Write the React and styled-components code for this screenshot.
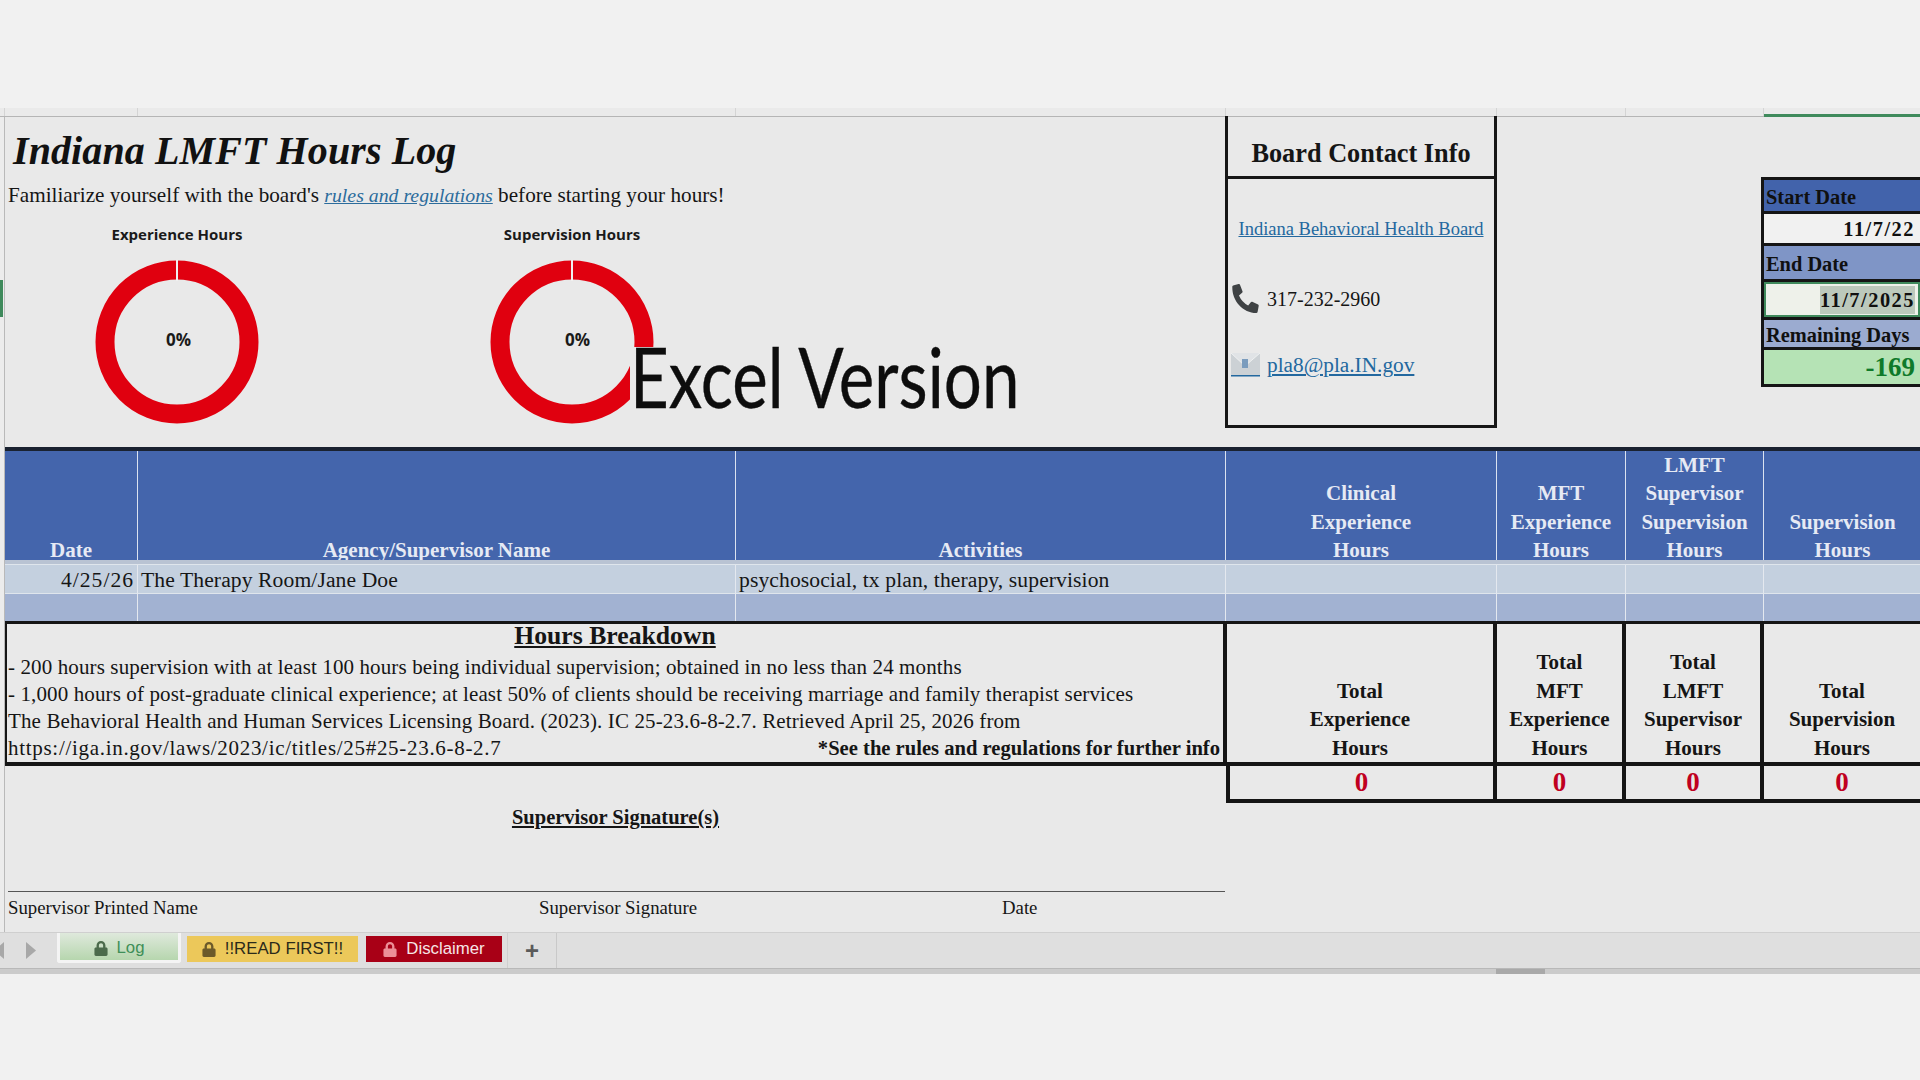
import React from 'react';
import styled, { createGlobalStyle } from 'styled-components';
import { FaLock, FaPhoneAlt } from 'react-icons/fa';

const COLUMNS = '133px 598px 490px 271px 129px 138px 157px';
const SERIF = '"Liberation Serif", "Times New Roman", serif';

const GlobalStyle = createGlobalStyle`
  html, body {
    margin: 0;
    padding: 0;
    background: #f1f1f1;
    font-family: ${SERIF};
    overflow: hidden;
  }
`;

const Page = styled.div`
  width: 1920px;
  height: 1080px;
  display: flex;
  flex-direction: column;
  background: #f1f1f1;
  color: #151515;
`;

const TopMargin = styled.div`
  height: 108px;
  flex: none;
`;

const ColumnStrip = styled.div`
  height: 8px;
  flex: none;
  display: grid;
  grid-template-columns: 5px ${COLUMNS};
  background: #eaeaea;
  border-bottom: 1px solid #b5b5b5;
  margin-bottom: -1px;
  position: relative;
`;

const StripCell = styled.div`
  border-right: 1px solid #d4d4d4;
  ${p => p.$active && 'border-bottom: 3px solid #3f8a5c; border-right: 0; margin-bottom: -1px;'}
`;

const SheetRow = styled.div`
  height: 816px;
  flex: none;
  display: flex;
  background: #e9e9e9;
`;

const Gutter = styled.div`
  width: 4px;
  flex: none;
  background: #ececec;
  border-right: 1px solid #b9b9b9;
  display: flex;
  flex-direction: column;
`;

const GutterMark = styled.div`
  margin-top: 164px;
  height: 37px;
  width: 3px;
  background: #3f8a5c;
`;

const Sheet = styled.div`
  width: 1915px;
  display: flex;
  flex-direction: column;
`;

const TopSection = styled.section`
  height: 331px;
  flex: none;
  display: flex;
  position: relative;
`;

const Intro = styled.div`
  width: 1220px;
  flex: none;
  padding: 13px 0 0 3px;
  box-sizing: border-box;
`;

const Title = styled.h1`
  margin: 0 0 0 5px;
  font: italic bold 40px/44px ${SERIF};
  letter-spacing: 0.1px;
  color: #111;
`;

const Subtitle = styled.p`
  margin: 10px 0 0;
  font-size: 21.2px;
  line-height: 24px;
`;

const RulesLink = styled.a`
  font-style: italic;
  font-size: 19.8px;
  color: #2c6c9c;
  text-decoration: underline;
`;

const DonutRow = styled.div`
  display: flex;
  margin-top: 18px;
`;

const DonutBlock = styled.figure`
  margin: 0 0 0 ${p => p.$left}px;
  width: 170px;
  display: flex;
  flex-direction: column;
  align-items: center;
`;

const DonutLabel = styled.figcaption`
  font: 700 15px/18px "Open Sans", sans-serif;
  color: #1a1a1a;
  white-space: nowrap;
`;

const DonutWrap = styled.div`
  margin-top: 17px;
  width: 164px;
  height: 164px;
  position: relative;
`;

const DonutValue = styled.span`
  position: absolute;
  left: ${p => p.$left}px;
  top: 70px;
  font: 700 17px/20px "Open Sans", sans-serif;
  color: #1a1a1a;
`;

const Watermark = styled.div`
  position: absolute;
  left: 625px;
  top: 231px;
  width: 392px;
  height: 64px;
  background: #e9e9e9;
  font: 400 84px/58px "Lato", "Noto Sans", sans-serif;
  color: #0d0d0d;
  -webkit-text-stroke: 0.4px #0d0d0d;
  white-space: nowrap;
  overflow: visible;
`;

const WatermarkText = styled.span`
  display: inline-block;
  transform: scaleX(0.8);
  transform-origin: left center;
`;

const ContactBox = styled.aside`
  width: 272px;
  height: 312px;
  flex: none;
  box-sizing: border-box;
  border: 3px solid #161616;
  border-top: 0;
  display: flex;
  flex-direction: column;
`;

const ContactTitle = styled.h2`
  height: 63px;
  flex: none;
  margin: 0;
  box-sizing: border-box;
  border-bottom: 3px solid #161616;
  display: flex;
  align-items: center;
  justify-content: center;
  font: bold 26.3px/30px ${SERIF};
  padding-top: 15px;
`;

const ContactLink = styled.a`
  font-size: 18.5px;
  line-height: 22px;
  color: #23689f;
  text-decoration: underline;
  text-align: center;
  display: block;
  margin-top: 39px;
`;

const ContactLine = styled.div`
  display: flex;
  align-items: center;
  gap: 7px;
  margin: ${p => p.$top}px 0 0 3px;
  font-size: 20px;
  line-height: 28px;
  ${p => p.$link && `
    font-size: 21.3px;
    color: #23689f;
    text-decoration: underline;
  `}
`;

const PhoneIcon = styled(FaPhoneAlt)`
  width: 29px;
  height: 29px;
  color: #3f4244;
  flex: none;
  transform: scaleX(0.92);
`;

const DatePanel = styled.aside`
  margin: 61px 0 0 264px;
  width: 159px;
  height: 210px;
  flex: none;
  box-sizing: border-box;
  background: #151515;
  padding: 3px 0 3px 3px;
  display: flex;
  flex-direction: column;
  gap: 3px;
`;

const DateCell = styled.div`
  height: ${p => p.$h}px;
  flex: none;
  box-sizing: border-box;
  display: flex;
  align-items: center;
  justify-content: ${p => (p.$value ? 'flex-end' : 'flex-start')};
  padding: ${p => (p.$value ? '0 5px 0 2px' : '2px 0 0 2px')};
  background: ${p => p.$bg};
  color: ${p => p.$color || '#101010'};
  font-weight: bold;
  font-size: ${p => p.$size || 20.4}px;
  letter-spacing: ${p => (p.$spaced ? 1.5 : 0)}px;
  line-height: 24px;
  white-space: nowrap;
  ${p => p.$selected && 'border: 2px solid #3f8a5c; padding-right: 3px;'}
`;

const Selected = styled.span`
  background: #bcc9bc;
  padding: 2px 0;
`;

const DarkRule = styled.div`
  height: 4px;
  flex: none;
  background: #1a2230;
`;

const GridRow = styled.div`
  display: grid;
  grid-template-columns: ${COLUMNS};
  height: ${p => p.$h}px;
  flex: none;
  background: ${p => p.$bg || 'transparent'};
`;

const HeadCell = styled.div`
  display: flex;
  align-items: flex-end;
  justify-content: center;
  text-align: center;
  font-weight: bold;
  font-size: 21px;
  line-height: 28.4px;
  color: #e6eaf4;
  border-right: 1px solid #dbe2f0;
  padding-bottom: 0;
  &:last-child { border-right: 0; }
`;

const RowGap = styled.div`
  height: 5px;
  flex: none;
  background: #b9c3d3;
  border-bottom: 1px solid #dfe5ec;
  box-sizing: border-box;
`;

const BodyCell = styled.div`
  display: flex;
  align-items: center;
  justify-content: ${p => (p.$right ? 'flex-end' : 'flex-start')};
  padding: 3px 3px 0;
  font-size: 21.6px;
  letter-spacing: ${p => (p.$right ? 1 : 0.1)}px;
  white-space: nowrap;
  border-right: 1px solid #e4e8ef;
  border-bottom: ${p => (p.$line ? '2px solid #dfe5ec' : '0')};
  &:last-child { border-right: 0; }
`;

const Breakdown = styled.div`
  display: grid;
  grid-template-columns: 1222px 270px 129px 138px 156px;
  height: 145px;
  flex: none;
  border-top: 3px solid #151515;
  border-bottom: 4px solid #151515;
  box-sizing: border-box;
`;

const NoteBox = styled.div`
  border-left: 2px solid #151515;
  border-right: 4px solid #151515;
  padding: 0 1px;
  position: relative;
`;

const NoteTitle = styled.h3`
  margin: 0;
  height: 30px;
  text-align: center;
  font: bold 25.7px/24px ${SERIF};
  text-decoration: underline;
`;

const NoteLine = styled.div`
  display: flex;
  justify-content: space-between;
  font-size: 21px;
  letter-spacing: 0.12px;
  line-height: 27px;
  white-space: nowrap;
`;

const NoteUrl = styled.span`
  letter-spacing: 0.7px;
`;

const NoteBold = styled.b`
  margin-right: 2px;
  font-size: 20.6px;
  letter-spacing: 0;
`;

const TotalCell = styled.div`
  display: flex;
  align-items: flex-end;
  justify-content: center;
  text-align: center;
  font-weight: bold;
  font-size: 21px;
  line-height: 28.4px;
  color: #151515;
  border-right: 4px solid #151515;
  &:last-child { border-right: 0; }
`;

const Values = styled.div`
  display: grid;
  grid-template-columns: 1222px 270px 129px 138px 156px;
  height: 37px;
  flex: none;
`;

const ValueCell = styled.div`
  display: flex;
  align-items: center;
  justify-content: center;
  color: #c0001f;
  font-weight: bold;
  font-size: 27px;
  border-bottom: 4px solid #151515;
  border-right: 4px solid #151515;
  ${p => p.$first && 'border-left: 4px solid #151515; margin-left: -1px;'}
  &:last-child { border-right: 0; }
`;

const Signatures = styled.div`
  flex: 1;
  padding-left: 3px;
  display: flex;
  flex-direction: column;
`;

const SignatureTitle = styled.div`
  width: 1215px;
  margin-top: 2px;
  text-align: center;
  font-weight: bold;
  font-size: 20.5px;
  line-height: 24px;
  text-decoration: underline;
`;

const SignatureLine = styled.div`
  width: 1217px;
  margin-top: 62px;
  height: 1px;
  background: #555;
`;

const SignatureLabels = styled.div`
  display: grid;
  grid-template-columns: 531px 463px auto;
  margin-top: 5px;
  font-size: 18.8px;
  line-height: 22px;
`;

const TabBar = styled.nav`
  height: 36px;
  flex: none;
  display: flex;
  align-items: flex-start;
  background: #dfdfdf;
  border-top: 1px solid #cfcfcf;
  box-sizing: border-box;
`;

const ArrowSlot = styled.div`
  width: 57px;
  height: 100%;
  flex: none;
  display: flex;
  align-items: center;
  gap: 22px;
  box-sizing: border-box;
`;

const Tab = styled.div`
  height: ${p => (p.$active ? 30 : 26)}px;
  margin: ${p => (p.$active ? '0 6px 0 0' : '3px 8px 0 0')};
  width: ${p => p.$w}px;
  flex: none;
  box-sizing: border-box;
  display: flex;
  align-items: center;
  justify-content: center;
  gap: 9px;
  font: 16.8px/20px "Liberation Sans", Arial, sans-serif;
  background: ${p => p.$bg};
  color: ${p => p.$color};
  ${p => p.$active && 'border: 3px solid #f4f4f4; border-top: 0; padding-top: 3px; border-radius: 0 0 3px 3px;'}
`;

const LockIcon = styled(FaLock)`
  width: 14px;
  height: 15px;
  color: ${p => p.$color};
`;

const AddTab = styled.div`
  width: 50px;
  height: 100%;
  flex: none;
  margin-left: -3px;
  box-sizing: border-box;
  display: flex;
  align-items: center;
  justify-content: center;
  border-left: 1px solid #cfcfcf;
  border-right: 1px solid #c9c9c9;
  font: 700 24px/24px "Liberation Sans", Arial, sans-serif;
  color: #5a5a5a;
`;

const ScrollTrack = styled.div`
  height: 6px;
  flex: none;
  background: #cbcbcb;
  border-top: 1px solid #b8b8b8;
  box-sizing: border-box;
  padding-left: 1496px;
`;

const ScrollThumb = styled.div`
  width: 49px;
  height: 100%;
  background: #a9a9a9;
`;

function Donut() {
  return (
    <svg width="164" height="164" viewBox="0 0 164 164">
      <circle cx="82" cy="82" r="72" fill="none" stroke="#e0000f" strokeWidth="19" />
      <rect x="81" y="0" width="2" height="21" fill="#f0f0f0" />
    </svg>
  );
}

function EnvelopeIcon() {
  return (
    <svg width="29" height="24" viewBox="0 0 29 24">
      <rect width="29" height="22" fill="#ccd1d5" />
      <path d="M0 0 L14 13 L29 0" fill="#e0e3e6" stroke="#eef0f1" strokeWidth="1" />
      <rect x="11" y="6" width="6" height="9" fill="#7b9cbd" />
      <rect y="22" width="29" height="1.5" fill="#23689f" />
    </svg>
  );
}

function ArrowIcon() {
  return (
    <svg width="10" height="17" viewBox="0 0 10 17">
      <path d="M0 0 L10 8.5 L0 17 Z" fill="#a8a8a8" />
    </svg>
  );
}

function ClippedBackArrow() {
  return (
    <svg width="4" height="17" viewBox="0 0 4 17">
      <path d="M4 0 L4 17 L0 13.6 L0 3.4 Z" fill="#a8a8a8" />
    </svg>
  );
}

const HEADERS = [
  ['Date'],
  ['Agency/Supervisor Name'],
  ['Activities'],
  ['Clinical', 'Experience', 'Hours'],
  ['MFT', 'Experience', 'Hours'],
  ['LMFT', 'Supervisor', 'Supervision', 'Hours'],
  ['Supervision', 'Hours'],
];

const TOTALS = [
  ['Total', 'Experience', 'Hours'],
  ['Total', 'MFT', 'Experience', 'Hours'],
  ['Total', 'LMFT', 'Supervisor', 'Hours'],
  ['Total', 'Supervision', 'Hours'],
];

function Lines({ items }) {
  return (
    <div>
      {items.map(line => (
        <div key={line}>{line}</div>
      ))}
    </div>
  );
}

export default function App() {
  return (
    <Page>
      <GlobalStyle />
      <TopMargin />
      <ColumnStrip>
        <StripCell />
        <StripCell />
        <StripCell />
        <StripCell />
        <StripCell />
        <StripCell />
        <StripCell />
        <StripCell $active />
      </ColumnStrip>
      <SheetRow>
        <Gutter>
          <GutterMark />
        </Gutter>
        <Sheet>
          <TopSection>
            <Intro>
              <Title>Indiana LMFT Hours Log</Title>
              <Subtitle>
                Familiarize yourself with the board's <RulesLink>rules and regulations</RulesLink> before starting your hours!
              </Subtitle>
              <DonutRow>
                <DonutBlock $left={84}>
                  <DonutLabel>Experience Hours</DonutLabel>
                  <DonutWrap>
                    <Donut />
                    <DonutValue $left={71}>0%</DonutValue>
                  </DonutWrap>
                </DonutBlock>
                <DonutBlock $left={225}>
                  <DonutLabel>Supervision Hours</DonutLabel>
                  <DonutWrap>
                    <Donut />
                    <DonutValue $left={75}>0%</DonutValue>
                  </DonutWrap>
                </DonutBlock>
              </DonutRow>
            </Intro>
            <Watermark><WatermarkText>Excel Version</WatermarkText></Watermark>
            <ContactBox>
              <ContactTitle>Board Contact Info</ContactTitle>
              <ContactLink>Indiana Behavioral Health Board</ContactLink>
              <ContactLine $top={44}>
                <PhoneIcon />
                317-232-2960
              </ContactLine>
              <ContactLine $top={38} $link>
                <EnvelopeIcon />
                pla8@pla.IN.gov
              </ContactLine>
            </ContactBox>
            <DatePanel>
              <DateCell $h={31} $bg="#4263ab">Start Date</DateCell>
              <DateCell $h={29} $bg="#f1f1f1" $value $spaced>11/7/22</DateCell>
              <DateCell $h={33} $bg="#7f95c6">End Date</DateCell>
              <DateCell $h={35} $bg="#eef1ea" $value $spaced $selected><Selected>11/7/2025</Selected></DateCell>
              <DateCell $h={27} $bg="#9babd0">Remaining Days</DateCell>
              <DateCell $h={34} $bg="#b5e3b5" $color="#0f7a2a" $size={27} $value>-169</DateCell>
            </DatePanel>
          </TopSection>
          <DarkRule />
          <GridRow $h={109} $bg="#4465ac">
            {HEADERS.map(items => (
              <HeadCell key={items.join(' ')}><Lines items={items} /></HeadCell>
            ))}
          </GridRow>
          <RowGap />
          <GridRow $h={29} $bg="#c4d0df">
            <BodyCell $right $line>4/25/26</BodyCell>
            <BodyCell $line>The Therapy Room/Jane Doe</BodyCell>
            <BodyCell $line>psychosocial, tx plan, therapy, supervision</BodyCell>
            <BodyCell $line />
            <BodyCell $line />
            <BodyCell $line />
            <BodyCell $line />
          </GridRow>
          <GridRow $h={27} $bg="#a2b2d2">
            {HEADERS.map(items => (
              <BodyCell key={items.join(' ')} />
            ))}
          </GridRow>
          <Breakdown>
            <NoteBox>
              <NoteTitle>Hours Breakdown</NoteTitle>
              <NoteLine>- 200 hours supervision with at least 100 hours being individual supervision; obtained in no less than 24 months</NoteLine>
              <NoteLine>- 1,000 hours of post-graduate clinical experience; at least 50% of clients should be receiving marriage and family therapist services</NoteLine>
              <NoteLine>The Behavioral Health and Human Services Licensing Board. (2023). IC 25-23.6-8-2.7. Retrieved April 25, 2026 from</NoteLine>
              <NoteLine>
                <NoteUrl>https://iga.in.gov/laws/2023/ic/titles/25#25-23.6-8-2.7</NoteUrl>
                <NoteBold>*See the rules and regulations for further info</NoteBold>
              </NoteLine>
            </NoteBox>
            {TOTALS.map(items => (
              <TotalCell key={items.join(' ')}><Lines items={items} /></TotalCell>
            ))}
          </Breakdown>
          <Values>
            <div />
            <ValueCell $first>0</ValueCell>
            <ValueCell>0</ValueCell>
            <ValueCell>0</ValueCell>
            <ValueCell>0</ValueCell>
          </Values>
          <Signatures>
            <SignatureTitle>Supervisor Signature(s)</SignatureTitle>
            <SignatureLine />
            <SignatureLabels>
              <span>Supervisor Printed Name</span>
              <span>Supervisor Signature</span>
              <span>Date</span>
            </SignatureLabels>
          </Signatures>
        </Sheet>
      </SheetRow>
      <TabBar>
        <ArrowSlot><ClippedBackArrow /><ArrowIcon /></ArrowSlot>
        <Tab $active $w={124} $bg="linear-gradient(#dfe9dc, #b6d6ae)" $color="#3f8f58">
          <LockIcon $color="#4b6b4b" />Log
        </Tab>
        <Tab $w={171} $bg="#ecc85a" $color="#2a2a1a">
          <LockIcon $color="#6b5a2a" />!!READ FIRST!!
        </Tab>
        <Tab $w={136} $bg="#a80016" $color="#f6e6e6">
          <LockIcon $color="#ec8f98" />Disclaimer
        </Tab>
        <AddTab>+</AddTab>
      </TabBar>
      <ScrollTrack><ScrollThumb /></ScrollTrack>
    </Page>
  );
}
